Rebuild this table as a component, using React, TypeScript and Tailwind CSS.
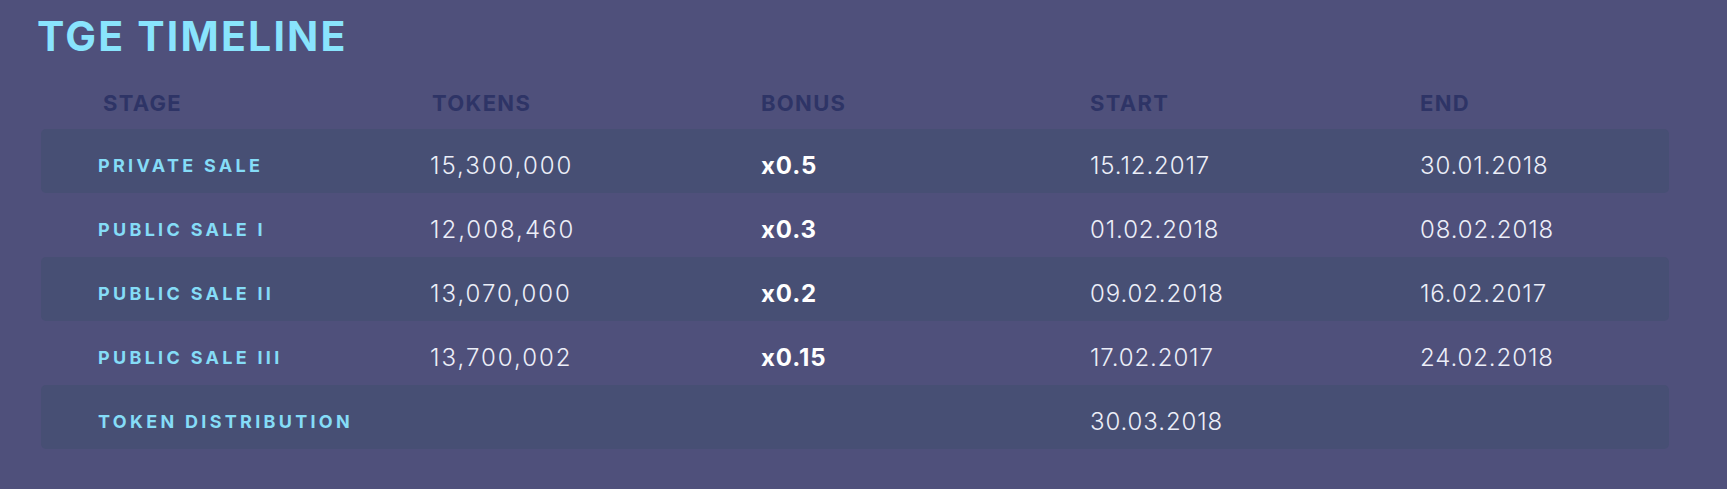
import React from 'react';

// Sale stages for the TGE table
const stages = [
  { stage: 'PRIVATE SALE', tokens: '15,300,000', bonus: 'x0.5', start: '15.12.2017', end: '30.01.2018' },
  { stage: 'PUBLIC SALE I', tokens: '12,008,460', bonus: 'x0.3', start: '01.02.2018', end: '08.02.2018' },
  { stage: 'PUBLIC SALE II', tokens: '13,070,000', bonus: 'x0.2', start: '09.02.2018', end: '16.02.2017' },
  { stage: 'PUBLIC SALE III', tokens: '13,700,002', bonus: 'x0.15', start: '17.02.2017', end: '24.02.2018' },
  { stage: 'TOKEN DISTRIBUTION', tokens: '', bonus: '', start: '30.03.2018', end: '' },
];

const cols = 'grid grid-cols-[332px_331px_329px_330px_1fr] pl-[57px] items-center';

const App = () => {
  return (
    <div className="w-full min-h-[489px] bg-[#4f507b] font-['Inter',sans-serif] pt-[12px]">
      <h1 className="ml-[37px] text-[41px] leading-[48px] font-bold tracking-[2.2px] text-[#89e4fd]">
        TGE TIMELINE
      </h1>

      <div className="ml-[41px] w-[1628px] mt-[26px]">
        {/* header row */}
        <div className={`${cols} h-[43px] pb-[8px] text-[22px] font-bold tracking-[1.3px] text-[#2e3466]`}>
          <span className="ml-[5px]">STAGE</span>
          <span className="ml-[2px]">TOKENS</span>
          <span>BONUS</span>
          <span>START</span>
          <span>END</span>
        </div>

        {stages.map((row, i) => (
          <div
            key={`stage-${i}`}
            className={`${cols} h-[64px] pt-[9px] rounded-[5px] ${i % 2 === 0 ? 'bg-[#474f74]' : ''}`}
          >
            <span className="text-[18px] font-bold tracking-[3.3px] text-[#85dcf7]">{row.stage}</span>
            <span className="text-[24px] font-light tracking-[2px] text-[#eceef8]">{row.tokens}</span>
            <span className="text-[24px] font-bold tracking-[0.9px] text-white">{row.bonus}</span>
            <span className="text-[24px] font-light tracking-[0.9px] text-[#eceef8]">{row.start}</span>
            <span className="text-[24px] font-light tracking-[0.9px] text-[#eceef8]">{row.end}</span>
          </div>
        ))}
      </div>
    </div>
  );
};

export default App;
